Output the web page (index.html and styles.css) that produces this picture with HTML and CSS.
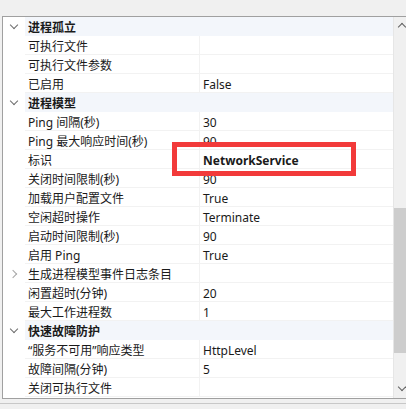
FILE: index.html
```html
<!DOCTYPE html>
<html lang="zh-CN">
<head>
  <meta charset="UTF-8">
  <title>高级设置</title>
  <link rel="stylesheet" href="styles.css">
</head>
<body>
  <div class="topbar"></div>
  <div class="frame">
    <div class="grid">
      <div class="row cat"><span class="gutter"><span class="chev down"></span></span><span class="name">进程孤立</span><span class="value"></span></div>
      <div class="row"><span class="gutter"></span><span class="name">可执行文件</span><span class="value"></span></div>
      <div class="row"><span class="gutter"></span><span class="name">可执行文件参数</span><span class="value"></span></div>
      <div class="row"><span class="gutter"></span><span class="name">已启用</span><span class="value">False</span></div>
      <div class="row cat"><span class="gutter"><span class="chev down"></span></span><span class="name">进程模型</span><span class="value"></span></div>
      <div class="row"><span class="gutter"></span><span class="name">Ping 间隔(秒)</span><span class="value">30</span></div>
      <div class="row"><span class="gutter"></span><span class="name">Ping 最大响应时间(秒)</span><span class="value">90</span></div>
      <div class="row"><span class="gutter"></span><span class="name">标识</span><span class="value bold">NetworkService</span></div>
      <div class="row"><span class="gutter"></span><span class="name">关闭时间限制(秒)</span><span class="value">90</span></div>
      <div class="row"><span class="gutter"></span><span class="name">加载用户配置文件</span><span class="value">True</span></div>
      <div class="row"><span class="gutter"></span><span class="name">空闲超时操作</span><span class="value">Terminate</span></div>
      <div class="row"><span class="gutter"></span><span class="name">启动时间限制(秒)</span><span class="value">90</span></div>
      <div class="row"><span class="gutter"></span><span class="name">启用 Ping</span><span class="value">True</span></div>
      <div class="row"><span class="gutter"><span class="chev right"></span></span><span class="name">生成进程模型事件日志条目</span><span class="value"></span></div>
      <div class="row"><span class="gutter"></span><span class="name">闲置超时(分钟)</span><span class="value">20</span></div>
      <div class="row"><span class="gutter"></span><span class="name">最大工作进程数</span><span class="value">1</span></div>
      <div class="row cat"><span class="gutter"><span class="chev down"></span></span><span class="name">快速故障防护</span><span class="value"></span></div>
      <div class="row"><span class="gutter"></span><span class="name">“服务不可用”响应类型</span><span class="value">HttpLevel</span></div>
      <div class="row"><span class="gutter"></span><span class="name">故障间隔(分钟)</span><span class="value">5</span></div>
      <div class="row"><span class="gutter"></span><span class="name">关闭可执行文件</span><span class="value"></span></div>
    </div>
    <div class="scrollbar">
      <span class="arrow up"></span>
      <div class="track"><div class="thumb"></div></div>
      <span class="arrow dn"></span>
    </div>
  </div>
  <div class="desc"></div>
  <div class="highlight"></div>
</body>
</html>
```

FILE: styles.css
```css
body {
  margin: 0;
  height: 409px;
  overflow: hidden;
  background: #f0f0f0;
  font-family: "Noto Sans", "Noto Sans CJK SC", sans-serif;
  font-size: 12px;
  color: #1a1a1a;
  position: relative;
}
.topbar {
  height: 16px;
}
.frame {
  display: flex;
  margin-left: 2px;
  height: 381px;
  border-top: 1px solid #a0a0a0;
  border-left: 1px solid #a0a0a0;
  border-bottom: 1px solid #a0a0a0;
  background: #fff;
}
.grid {
  flex: 1;
  display: flex;
  flex-direction: column;
}
.row {
  display: flex;
  height: 19px;
  line-height: 22px;
  overflow: hidden;
}
.gutter {
  width: 22px;
  flex: none;
  position: relative;
  background: #fff;
}
.name {
  width: 171px;
  flex: none;
  padding-left: 3px;
  border-bottom: 1px solid #f2f2f2;
  border-right: 1px solid #f2f2f2;
  white-space: nowrap;
  overflow: hidden;
}
.value {
  flex: 1;
  padding-left: 3px;
  border-bottom: 1px solid #f2f2f2;
  white-space: nowrap;
}
.cat .name,
.cat .value {
  background: #f3f6fb;
  font-weight: bold;
  border-color: #f3f6fb;
}
.bold {
  font-weight: bold;
}
.chev {
  position: absolute;
  width: 5px;
  height: 5px;
  border-right: 1.5px solid #6d6d6d;
  border-bottom: 1.5px solid #6d6d6d;
}
.chev.down {
  left: 8px;
  top: 5px;
  transform: rotate(45deg);
}
.chev.right {
  left: 7px;
  top: 7px;
  transform: rotate(-45deg);
  border-color: #a6a6a6;
}
.scrollbar {
  width: 12px;
  flex: none;
  display: flex;
  flex-direction: column;
  background: #f0f0f0;
  border-left: 1px solid #e6e6e6;
}
.track {
  flex: 1;
  padding-top: 174px;
  padding-bottom: 28px;
}
.thumb {
  height: 100%;
  background: #cdcdcd;
}
.arrow {
  height: 17px;
  position: relative;
}
.arrow::after {
  content: "";
  position: absolute;
  left: 5px;
  width: 5px;
  height: 5px;
  border-left: 1.5px solid #606060;
  border-top: 1.5px solid #606060;
}
.arrow.up::after {
  top: 7px;
  transform: rotate(45deg);
}
.arrow.dn::after {
  top: 3px;
  transform: rotate(225deg);
}
.desc {
  margin-top: 4px;
  border-top: 1px solid #c8c8c8;
  height: 20px;
}
.highlight {
  position: absolute;
  left: 172px;
  top: 142px;
  width: 174px;
  height: 24px;
  border: 5px solid #f23a3a;
}
```
